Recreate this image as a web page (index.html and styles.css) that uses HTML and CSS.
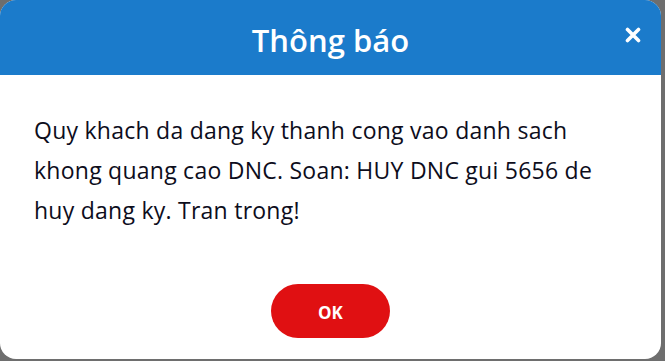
FILE: index.html
```html
<!DOCTYPE html>
<html lang="vi">
<head>
<meta charset="utf-8">
<title>Thông báo</title>
<link rel="stylesheet" href="styles.css">
</head>
<body>
<div class="dialog">
  <div class="dialog-header">
    <h1 class="dialog-title">Thông báo</h1>
    <button class="dialog-close" aria-label="Đóng">
      <svg width="16" height="16" viewBox="0 0 16 16"><path d="M2.5 2.5 L13.5 13.5 M13.5 2.5 L2.5 13.5" stroke="#fff" stroke-width="3.6" stroke-linecap="round"/></svg>
    </button>
  </div>
  <div class="dialog-body">
    <p class="dialog-message">Quy khach da dang ky thanh cong vao danh sach khong quang cao DNC. Soan: HUY DNC gui 5656 de huy dang ky. Tran trong!</p>
    <button class="btn-ok">OK</button>
  </div>
</div>
</body>
</html>
```

FILE: styles.css
```css
html, body {
  margin: 0;
  padding: 0;
}
body {
  background: #6e6e6e;
  width: 665px;
  height: 361px;
  overflow: hidden;
  font-family: "Open Sans", "Noto Sans", sans-serif;
}
.dialog {
  width: 661px;
  height: 359px;
  background: #fff;
  border-radius: 16px;
  overflow: hidden;
  display: flex;
  flex-direction: column;
}
.dialog-header {
  position: relative;
  height: 75px;
  flex: 0 0 75px;
  background: #1b7bcb;
  display: flex;
  align-items: center;
  justify-content: center;
}
.dialog-title {
  margin: 4px 0 0 0;
  color: #fff;
  font-size: 31px;
  font-weight: 600;
  letter-spacing: 0;
}
.dialog-close {
  position: absolute;
  right: 20px;
  top: 27px;
  width: 16px;
  height: 16px;
  padding: 0;
  border: 0;
  background: none;
  display: flex;
}
.dialog-body {
  display: flex;
  flex-direction: column;
  align-items: center;
  padding: 35px 34px 0 34px;
}
.dialog-message {
  align-self: flex-start;
  width: 590px;
  margin: 0;
  color: #0d0d1c;
  font-size: 23px;
  line-height: 40px;
  letter-spacing: 0.25px;
}
.btn-ok {
  margin-top: 54px;
  width: 119px;
  height: 54px;
  border: 0;
  border-radius: 27px;
  background: #e01012;
  color: #fff;
  font-family: "Open Sans", "Noto Sans", sans-serif;
  font-size: 17px;
  font-weight: 700;
  padding-top: 3px;
}
```
